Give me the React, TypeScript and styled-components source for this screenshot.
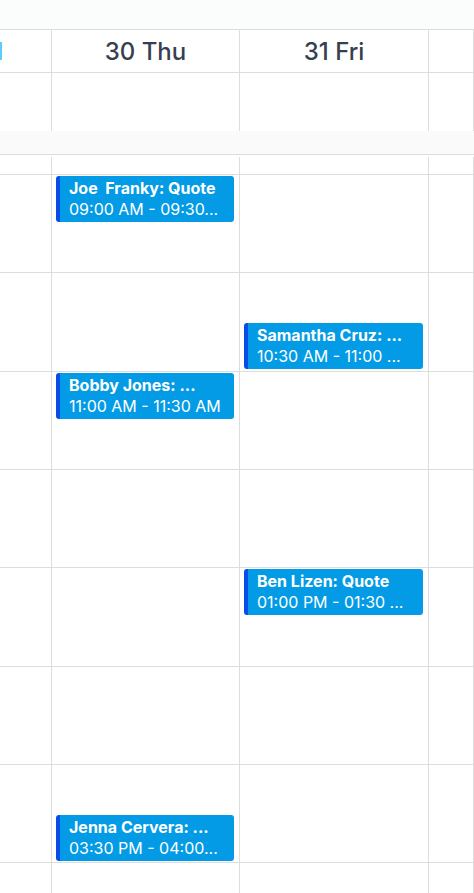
import React from 'react';
import styled, { createGlobalStyle } from 'styled-components';

interface CalEvent {
    title: string
    time: string
    start: number
}

interface Day {
    label: string
    events: CalEvent[]
}

const HOUR = 98.33;
const FIRST_HOUR = 9;
const PARTIAL = 18;

// titles/times are already clipped the way the calendar shows them
const days: Day[] = [
    {
        label: "30 Thu",
        events: [
            { title: "Joe  Franky: Quote", time: "09:00 AM - 09:30...", start: 9 },
            { title: "Bobby Jones: ...", time: "11:00 AM - 11:30 AM", start: 11 },
            { title: "Jenna Cervera: ...", time: "03:30 PM - 04:00...", start: 15.5 },
        ]
    },
    {
        label: "31 Fri",
        events: [
            { title: "Samantha Cruz: ...", time: "10:30 AM - 11:00 ...", start: 10.5 },
            { title: "Ben Lizen: Quote", time: "01:00 PM - 01:30 ...", start: 13 },
        ]
    }
];

const hours = [9, 10, 11, 12, 13, 14, 15, 16];

const GlobalStyle = createGlobalStyle`
  html, body {
    margin: 0;
    padding: 0;
    background: #ffffff;
    overflow: hidden;
  }
  * { box-sizing: border-box; }
`;

const Page = styled.div`
  width: 474px;
  height: 893px;
  overflow: hidden;
  font-family: Inter, "Noto Sans", sans-serif;
  background: #fff;
`;

const TopBar = styled.div`
  height: 30px;
  background: #fbfcfc;
  border-bottom: 1px solid #dddddd;
`;

const Columns = styled.div`
  display: grid;
  grid-template-columns: 52px 188px 189px 1fr;
`;

const HeaderCell = styled.div`
  height: 43px;
  border-right: 1px solid #dddddd;
  border-bottom: 1px solid #dddddd;
  display: flex;
  align-items: center;
  justify-content: center;
  font-size: 24px;
  font-weight: 500;
  color: #363f4f;
`;

const TodayEdge = styled.div`
  align-self: center;
  margin-right: auto;
  width: 2px;
  height: 18px;
  background: #5ccdf8;
`;

const AllDayCell = styled.div`
  height: 58px;
  border-right: 1px solid #dddddd;
`;

const Divider = styled.div`
  height: 24px;
  background: #fafafa;
  border-bottom: 1px solid #dddddd;
  margin-bottom: 2px;
`;

const DayColumn = styled.div`
  position: relative;
  border-right: 1px solid #dddddd;
`;

const Slot = styled.div<{ $h: number }>`
  height: ${p => p.$h}px;
  border-bottom: 1px solid #dddddd;
`;

const Event = styled.div`
  position: absolute;
  left: 4px;
  right: 5px;
  height: 46px;
  padding: 2px 8px 2px 9px;
  background: #039be5;
  border-left: 4px solid #0a4ce6;
  border-radius: 3px;
  color: #ffffff;
  line-height: 21px;
  overflow: hidden;
`;

const EventLine = styled.div<{ $bold?: boolean }>`
  font-size: 16px;
  font-weight: ${p => (p.$bold ? 700 : 400)};
  white-space: pre;
  overflow: hidden;
  text-overflow: ellipsis;
`;

const Slots: React.FC = () => (
    <>
        <Slot $h={PARTIAL} />
        {hours.map(h => <Slot key={h} $h={HOUR} />)}
    </>
);

const App: React.FC = () => {
    return (
        <Page>
            <GlobalStyle />
            <TopBar />
            <Columns>
                <HeaderCell><TodayEdge /></HeaderCell>
                {days.map(d => <HeaderCell key={d.label}>{d.label}</HeaderCell>)}
                <HeaderCell />
                <AllDayCell />
                <AllDayCell />
                <AllDayCell />
                <AllDayCell />
            </Columns>
            <Divider />
            <Columns>
                <DayColumn><Slots /></DayColumn>
                {days.map(d => (
                    <DayColumn key={d.label}>
                        <Slots />
                        {d.events.map(ev => (
                            <Event
                                key={ev.title}
                                style={{ top: PARTIAL + (ev.start - FIRST_HOUR) * HOUR + 1 }}
                            >
                                <EventLine $bold>{ev.title}</EventLine>
                                <EventLine>{ev.time}</EventLine>
                            </Event>
                        ))}
                    </DayColumn>
                ))}
                <DayColumn><Slots /></DayColumn>
            </Columns>
        </Page>
    );
};

export default App;
